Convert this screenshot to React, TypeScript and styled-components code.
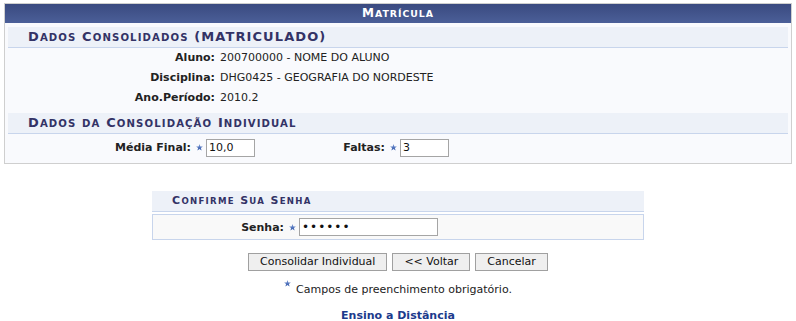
import styled, { createGlobalStyle } from "styled-components";

const GlobalStyle = createGlobalStyle`
  body {
    margin: 0;
    background: #fff;
    font-family: "DejaVu Sans", Verdana, sans-serif;
    font-size: 11px;
    color: #222;
  }
`;

const Page = styled.div`
  padding: 3px 4px 0;
  display: flex;
  flex-direction: column;
  align-items: center;
`;

const FormPanel = styled.div`
  width: 786px;
  border: 1px solid #cfcfcf;
  background: #f9fafd;
`;

const Caption = styled.div`
  height: 19px;
  line-height: 19px;
  text-align: center;
  background: linear-gradient(#3a4a80, #4b5f98);
  color: #fff;
  font-weight: bold;
  letter-spacing: 1px;
  font-size: 12px;
`;

const PanelBody = styled.div`
  padding: 4px 3px 2px;
  display: flex;
  flex-direction: column;
`;

const SectionHeader = styled.div<{ $small?: boolean }>`
  height: 20px;
  line-height: 20px;
  padding-left: 20px;
  background: #edf1f8;
  border-bottom: 1px solid #c8d5ec;
  color: #333366;
  font-weight: bold;
  letter-spacing: ${(p) => (p.$small ? "1.3px" : "1.1px")};
  font-size: ${(p) => (p.$small ? "11px" : "13px")};
  white-space: nowrap;
`;

const LowerCaps = styled.span`
  font-size: 0.78em;
  text-transform: uppercase;
`;

const InfoList = styled.div`
  display: flex;
  flex-direction: column;
  margin-bottom: 5px;
`;

const InfoRow = styled.div`
  display: grid;
  grid-template-columns: 207px 1fr;
  column-gap: 5px;
  height: 20px;
  line-height: 20px;
`;

const Label = styled.span`
  text-align: right;
  font-weight: bold;
`;

const FieldRow = styled.div`
  display: flex;
  align-items: center;
  height: 27px;
`;

const FieldLabel = styled.span<{ $w: number }>`
  width: ${(p) => p.$w}px;
  text-align: right;
  font-weight: bold;
  flex-shrink: 0;
`;

const Required = styled.span`
  display: inline-flex;
  margin: 0 3px 0 5px;
`;

const TextInput = styled.input<{ $w: number }>`
  box-sizing: border-box;
  width: ${(p) => p.$w}px;
  height: 18px;
  padding: 0 2px;
  border: 1px solid #a5a5a5;
  background: #fff;
  font-family: "DejaVu Sans", Verdana, sans-serif;
  font-size: 11px;
  color: #111;
  outline: none;

  &[type="password"] {
    font-size: 12px;
    letter-spacing: 1px;
  }
`;

const PasswordForm = styled.div`
  width: 492px;
  margin-top: 27px;
  display: flex;
  flex-direction: column;
`;

const PasswordBox = styled.div`
  margin-top: 2px;
  border: 1px solid #c8d5ec;
  background: #f9f9f9;
  height: 24px;
  display: flex;
  align-items: center;
`;

const ButtonBar = styled.div`
  margin-top: 13px;
  display: flex;
  gap: 5px;
`;

const Button = styled.button`
  height: 18px;
  padding: 0 11px;
  border: 1px solid #a0a0a0;
  background: #efefef;
  font-family: "DejaVu Sans", Verdana, sans-serif;
  font-size: 11px;
  color: #111;
  line-height: 16px;
`;

const Note = styled.div`
  margin-top: 12px;
  display: flex;
  align-items: flex-start;
  gap: 5px;
  height: 14px;
  line-height: 14px;
`;

const NoteStar = styled.span`
  display: inline-flex;
  margin-top: -3px;
`;

const FooterLink = styled.a`
  margin-top: 12px;
  font-weight: bold;
  color: #1c3a8c;
  text-decoration: none;
  font-size: 11px;
  line-height: 14px;
`;

// small caps drawn by hand: lowercase runs go uppercase at a smaller size
const SmallCaps = ({ text }: { text: string }) => {
  const parts = text.match(/[a-zà-ÿ]+|[^a-zà-ÿ]+/g) || [];
  return (
    <>
      {parts.map((part, i) =>
        /[a-zà-ÿ]/.test(part[0]) ? (
          <LowerCaps key={i}>{part}</LowerCaps>
        ) : (
          <span key={i}>{part}</span>
        )
      )}
    </>
  );
};

const Star = ({ size = 7 }: { size?: number }) => (
  <svg width={size} height={size} viewBox="0 0 10 10">
    <defs>
      <linearGradient id="starGrad" x1="0" y1="0" x2="0" y2="1">
        <stop offset="0" stopColor="#7d9ad6" />
        <stop offset="1" stopColor="#2f56a8" />
      </linearGradient>
    </defs>
    <polygon
      points="5,0 6.2,3.4 9.8,3.5 7,5.7 8,9.3 5,7.2 2,9.3 3,5.7 0.2,3.5 3.8,3.4"
      fill="url(#starGrad)"
    />
  </svg>
);

export default function App() {
  return (
    <>
      <GlobalStyle />
      <Page>
        <FormPanel>
          <Caption>
            <SmallCaps text="Matrícula" />
          </Caption>
          <PanelBody>
            <SectionHeader>
              <SmallCaps text="Dados Consolidados (MATRICULADO)" />
            </SectionHeader>
            <InfoList>
              <InfoRow>
                <Label>Aluno:</Label>
                <span>200700000 - NOME DO ALUNO</span>
              </InfoRow>
              <InfoRow>
                <Label>Disciplina:</Label>
                <span>DHG0425 - GEOGRAFIA DO NORDESTE</span>
              </InfoRow>
              <InfoRow>
                <Label>Ano.Período:</Label>
                <span>2010.2</span>
              </InfoRow>
            </InfoList>
            <SectionHeader>
              <SmallCaps text="Dados da Consolidação Individual" />
            </SectionHeader>
            <FieldRow>
              <FieldLabel $w={183}>Média Final:</FieldLabel>
              <Required>
                <Star />
              </Required>
              <TextInput $w={49} defaultValue="10,0" />
              <FieldLabel $w={130}>Faltas:</FieldLabel>
              <Required>
                <Star />
              </Required>
              <TextInput $w={49} defaultValue="3" />
            </FieldRow>
          </PanelBody>
        </FormPanel>

        <PasswordForm>
          <SectionHeader $small>
            <SmallCaps text="Confirme Sua Senha" />
          </SectionHeader>
          <PasswordBox>
            <FieldLabel $w={131}>Senha:</FieldLabel>
            <Required>
              <Star />
            </Required>
            <TextInput $w={139} type="password" defaultValue="123456" />
          </PasswordBox>
        </PasswordForm>

        <ButtonBar>
          <Button>Consolidar Individual</Button>
          <Button>&lt;&lt; Voltar</Button>
          <Button>Cancelar</Button>
        </ButtonBar>

        <Note>
          <NoteStar>
            <Star />
          </NoteStar>
          <span>Campos de preenchimento obrigatório.</span>
        </Note>

        <FooterLink href="#">Ensino a Distância</FooterLink>
      </Page>
    </>
  );
}
